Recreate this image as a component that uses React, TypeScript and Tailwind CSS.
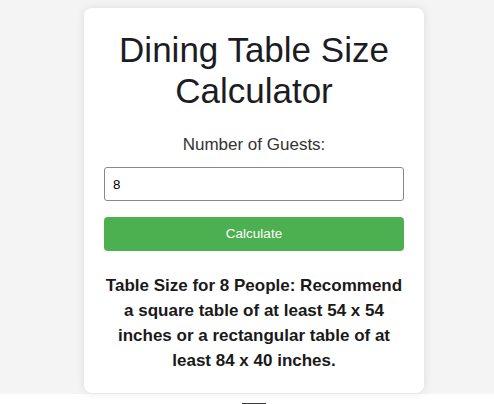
import { useState } from 'react';

// ─── Sizing rules ─────────────────────────────────────────────────────────────

function recommend(guests: number): string {
  if (guests <= 4) return `Table Size for ${guests} People: Recommend a square table of at least 36 x 36 inches or a rectangular table of at least 48 x 30 inches.`;
  if (guests <= 6) return `Table Size for ${guests} People: Recommend a square table of at least 48 x 48 inches or a rectangular table of at least 60 x 36 inches.`;
  if (guests <= 8) return `Table Size for ${guests} People: Recommend a square table of at least 54 x 54 inches or a rectangular table of at least 84 x 40 inches.`;
  return `Table Size for ${guests} People: Recommend a rectangular table of at least 108 x 40 inches.`;
}

// ─── Component ────────────────────────────────────────────────────────────────

export default function App() {
  const [guests, setGuests] = useState('8');
  const [result, setResult] = useState(recommend(8));

  const calculate = () => {
    const n = parseInt(guests, 10);
    if (!Number.isNaN(n) && n > 0) setResult(recommend(n));
  };

  return (
    <div className="min-h-[404px] bg-white font-['Liberation_Sans',Arial,sans-serif]">
      <div className="bg-[#f4f4f4] pt-2 pb-px pl-[84px]">
        <div className="w-[340px] rounded-lg bg-white p-5 text-center shadow-[0_0_10px_rgba(0,0,0,0.1)]">
          <h1 className="mt-px text-[35px] leading-[41px] text-[#1c1c24]">
            Dining Table Size Calculator
          </h1>

          <label htmlFor="guests" className="mt-6 block text-[17px] leading-5 text-[#333]">
            Number of Guests:
          </label>
          <input
            id="guests"
            type="number"
            value={guests}
            onChange={(e) => setGuests(e.target.value)}
            className="mt-3 block h-[34px] w-full rounded-[3px] border border-[#888] px-2 text-left text-[13.33px] text-black outline-none"
          />
          <button
            onClick={calculate}
            className="mt-4 block h-[34px] w-full rounded-[4px] bg-[#4caf50] text-[13.5px] text-white"
          >
            Calculate
          </button>

          <p className="mt-[22px] text-[17px] font-bold leading-[25px] text-[#1a1a1a]">
            {result}
          </p>
        </div>
      </div>
      <div className="ml-[242px] mt-[9px] h-1 w-6 bg-[#3a3a3a]" />
    </div>
  );
}
